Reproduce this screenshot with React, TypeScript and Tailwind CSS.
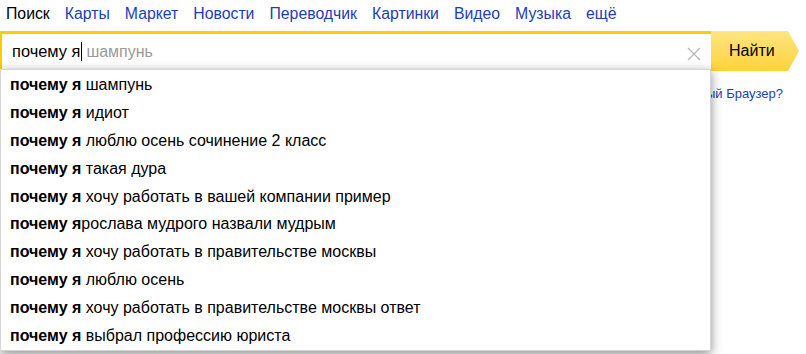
import React from "react";

const nav = ["Карты", "Маркет", "Новости", "Переводчик", "Картинки", "Видео", "Музыка", "ещё"];
const items = [
  "шампунь",
  "идиот",
  "люблю осень сочинение 2 класс",
  "такая дура",
  "хочу работать в вашей компании пример",
  "рослава мудрого назвали мудрым",
  "хочу работать в правительстве москвы",
  "люблю осень",
  "хочу работать в правительстве москвы ответ",
  "выбрал профессию юриста",
];

export default function App() {
  return (
    <div
      className="relative w-[806px] h-[354px] overflow-hidden bg-white text-black"
      style={{ fontFamily: '"Liberation Sans", Arial, sans-serif' }}
    >
      <div className="flex items-center gap-[15px] pl-[6px] h-[28px] text-[15.8px] leading-none">
        <span className="text-black">Поиск</span>
        {nav.map((n) => (
          <span key={n} className="text-[#1c3eb6]">
            {n}
          </span>
        ))}
      </div>
      <div className="flex mt-[3px] h-[40px]">
        <div className="relative flex items-center w-[711px] border-[#ffcc00] border-t-[3px] border-l-[2px] border-b-[2px] bg-white pl-[10px]">
          <span className="text-[16.4px] font-normal">почему я</span>
          <span className="w-px h-[19px] bg-black ml-[1px]" />
          <span className="text-[16px] text-[#9a9a9a] ml-[4px]">шампунь</span>
          <svg
            className="absolute right-[10px] top-[13px]"
            width="14"
            height="14"
            viewBox="0 0 14 14"
          >
            <path d="M1 1 L13 13 M13 1 L1 13" stroke="#b5b5b5" strokeWidth="1.2" />
          </svg>
        </div>
        <div
          className="flex items-center pl-[18px] w-[88px] h-[40px] text-[16px] bg-gradient-to-b from-[#ffe580] to-[#fdd233]"
          style={{ clipPath: "polygon(0 0, 77px 0, 88px 50%, 77px 100%, 0 100%)" }}
        >
          Найти
        </div>
      </div>
      <div className="flex justify-end pr-[23px] mt-[13px] text-[13px] text-[#1c3eb6]">
        Установить новый Браузер?
      </div>
      <div className="absolute left-0 top-[69px] w-[711px] h-[282px] bg-white border border-[#d6d6d6] shadow-[0_3px_10px_rgba(0,0,0,0.45)]">
        <div className="flex flex-col pt-[1px]">
          {items.map((t, i) => (
            <div key={i} className="flex items-center h-[27.9px] pl-[9px] text-[16px] leading-none whitespace-pre">
              <b className="font-bold">{i === 5 ? "почему я" : "почему я "}</b>
              <span>{t}</span>
            </div>
          ))}
        </div>
      </div>
    </div>
  );
}
